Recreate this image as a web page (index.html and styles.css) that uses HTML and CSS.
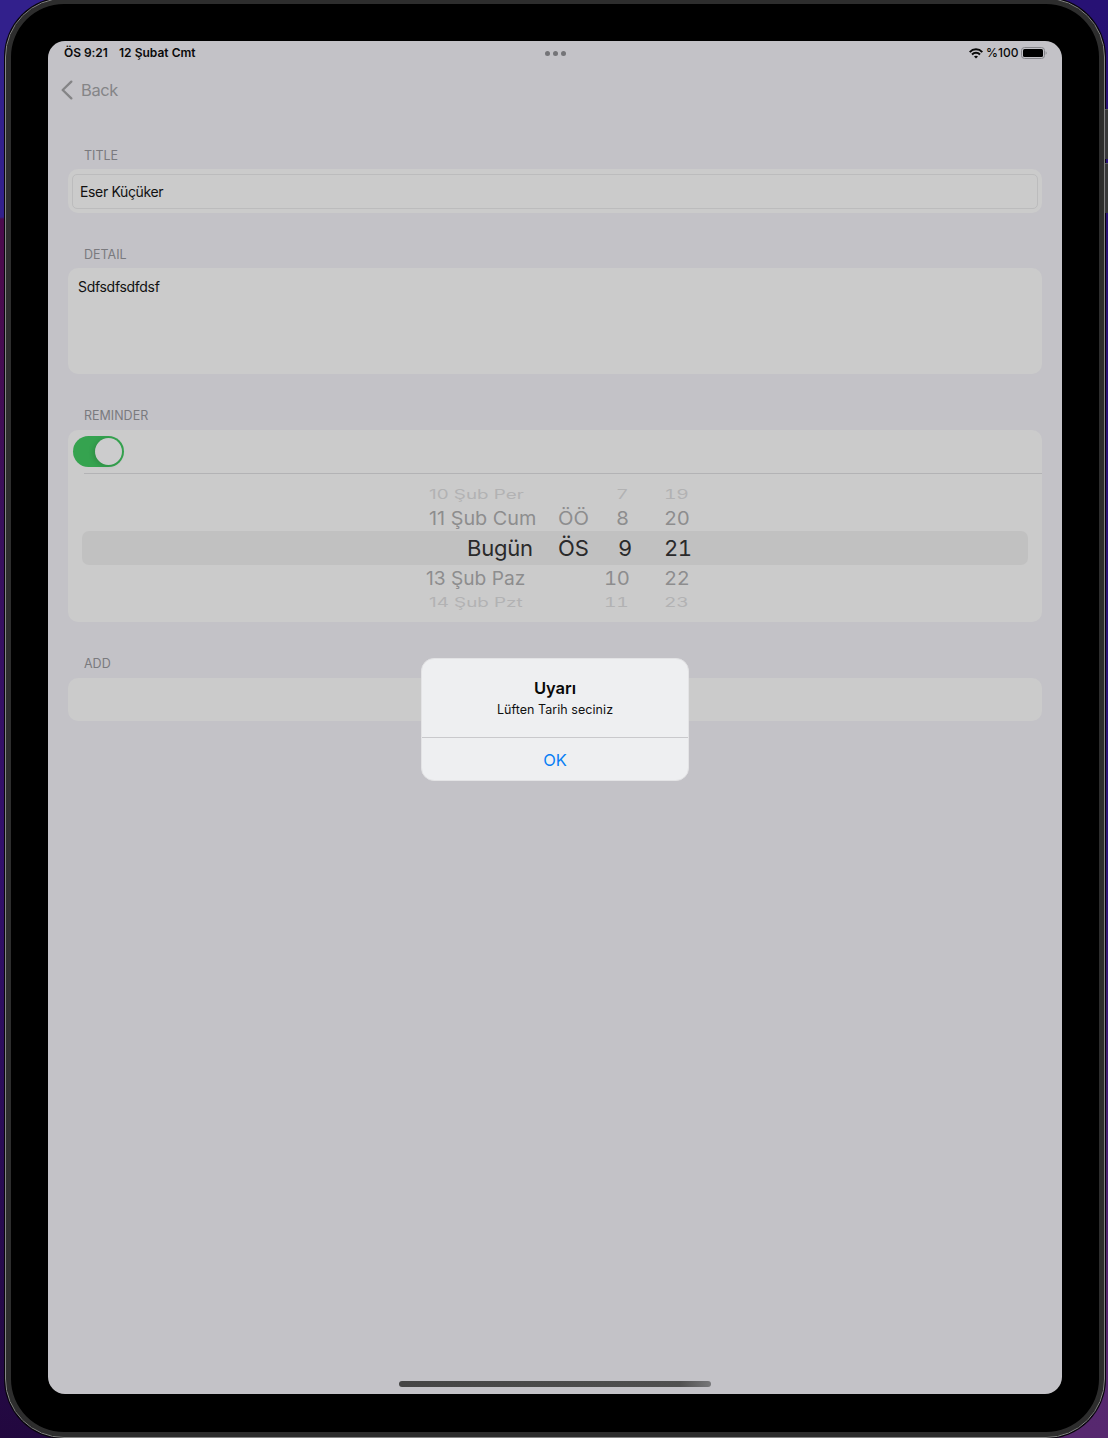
FILE: index.html
```html
<!DOCTYPE html>
<html lang="tr">
<head>
<meta charset="utf-8">
<title>Reminder</title>
<link rel="stylesheet" href="styles.css">
</head>
<body>
<div class="side-button side-button-up"></div>
<div class="side-button side-button-down"></div>
<div class="tablet">
  <main class="screen">
    <header class="status">
      <div class="status-left"><span class="clock">ÖS 9:21</span><span class="date">12 Şubat Cmt</span></div>
      <div class="dots"><i></i><i></i><i></i></div>
      <div class="status-right">
        <svg class="wifi" width="14" height="11" viewBox="0 0 14 11" fill="none" stroke="#080808" stroke-width="2"><path d="M.7 4.1C4.2.4 9.8.4 13.3 4.1"/><path d="M3 6.5c2.3-2.3 5.7-2.3 8 0"/><path d="M7 10.5 5 8.5c1.1-1.1 2.9-1.1 4 0z" fill="#080808" stroke="none"/></svg>
        <span class="percent">%100</span>
        <svg class="battery" width="26" height="12" viewBox="0 0 26 12"><rect x=".5" y=".5" width="23" height="11" rx="3" fill="none" stroke="#85858a"/><rect x="2" y="2" width="20" height="8" rx="1.5" fill="#000"/><path d="M24.7 4.2c1.2.6 1.2 3 0 3.6z" fill="#85858a"/></svg>
      </div>
    </header>
    <nav class="nav">
      <svg width="12" height="20" viewBox="0 0 12 20" fill="none" stroke="#848486" stroke-width="2.3" stroke-linecap="round" stroke-linejoin="round"><path d="M10.3 1.6 1.7 10l8.6 8.4"/></svg>
      <span class="back">Back</span>
    </nav>
    <section>
      <h2 class="label label-title">TITLE</h2>
      <div class="card title-card"><div class="field">Eser Küçüker</div></div>
    </section>
    <section>
      <h2 class="label label-detail">DETAIL</h2>
      <div class="card detail-card"><p class="detail">Sdfsdfsdfdsf</p></div>
    </section>
    <section>
      <h2 class="label label-reminder">REMINDER</h2>
      <div class="card reminder-card">
        <div class="switch-row"><div class="switch"><div class="knob"></div></div></div>
        <div class="picker">
          <div class="row outer top"><span class="day">10 Şub Per</span><span></span><span class="one">7</span><span>19</span></div>
          <div class="row near"><span class="day cum">11 Şub Cum</span><span>ÖÖ</span><span class="one">8</span><span>20</span></div>
          <div class="row current"><span class="today">Bugün</span><span>ÖS</span><span class="nine">9</span><span>21</span></div>
          <div class="row near"><span class="day">13 Şub Paz</span><span></span><span>10</span><span>22</span></div>
          <div class="row outer bottom"><span class="day">14 Şub Pzt</span><span></span><span>11</span><span>23</span></div>
        </div>
      </div>
    </section>
    <section>
      <h2 class="label label-add">ADD</h2>
      <div class="card add-card"></div>
    </section>
    <div class="home"></div>
  </main>
</div>
<div class="alert" role="alertdialog">
  <div class="alert-body"><h1>Uyarı</h1><p>Lüften Tarih seciniz</p></div>
  <div class="alert-action">OK</div>
</div>
</body>
</html>
```

FILE: styles.css
```css
* { box-sizing: border-box; margin: 0; padding: 0; }
body {
  position: relative;
  width: 1108px;
  height: 1438px;
  overflow: hidden;
  font-family: Inter, "Liberation Sans", sans-serif;
  color: #111;
  background:
    linear-gradient(#32208c 0 217px, #4b0b4d 219px 280px, #39105c 520px, #32106c 850px, #22083f 1438px) left / 554px 100% no-repeat,
    linear-gradient(#271174, #2c1578 60%, #55276f 90%, #57286f) right / 554px 100% no-repeat;
}
.tablet {
  width: 1100px;
  height: 1440px;
  margin: -2px 0 0 5px;
  padding: 42px 42px 43px;
  border: 1px solid #858585;
  border-radius: 59px;
  background: #000;
  box-shadow: inset 0 0 0 5px #2d2d2d, 0 0 0 1px #08050c;
}
.screen {
  width: 1014px;
  height: 1353px;
  border-radius: 17px;
  background: #c3c2c7;
  display: flex;
  flex-direction: column;
  padding: 0 20px;
}
.side-button { position: absolute; left: 1105px; width: 3px; height: 50px; background: #38383a; border-top: 1px solid #59595b; }
.side-button-up { top: 109px; }
.side-button-down { top: 163px; }
.status { height: 24px; margin: 0 -4px; display: grid; grid-template-columns: 1fr auto 1fr; align-items: center; font-size: 12px; font-weight: 600; line-height: 24px; color: #0a0a0a; }
.status-left { display: flex; gap: 10px; }
.clock { width: 45px; letter-spacing: -.05px; white-space: nowrap; }
.date { letter-spacing: .02px; }
.dots { display: flex; gap: 3px; padding-top: 1px; }
.dots i { width: 5px; height: 5px; border-radius: 50%; background: #747478; }
.status-right { display: flex; justify-content: flex-end; align-items: center; gap: 3px; margin-right: -1px; }
.wifi { margin-right: -1px; }
.percent { font-weight: 500; width: 32px; margin-left: 1px; }
.nav { height: 48px; margin-left: -7px; display: flex; align-items: center; gap: 8px; color: #858587; padding-top: 1px; }
.back { font-size: 16.5px; letter-spacing: -.4px; }
.label { font-size: 12.5px; font-weight: 400; line-height: 16px; color: #7a7a7e; margin-left: 16px; }
.label-title { margin-top: 35px; }
.label-detail { margin-top: 34px; }
.label-reminder, .label-add { margin-top: 34px; }
.card { background: #cbcbcb; border-radius: 10px; }
.title-card { height: 44px; margin-top: 5px; padding: 5px 4px; }
.field { height: 35px; border: 1px solid #bcbcbd; border-radius: 5px; padding-left: 7px; font-size: 14px; line-height: 33px; letter-spacing: -.35px; }
.detail-card { height: 106px; margin-top: 5px; padding: 10px; }
.detail { font-size: 14px; line-height: 18px; letter-spacing: -.3px; }
.reminder-card { height: 192px; margin-top: 6px; }
.switch-row { height: 44px; padding: 6px 5px; position: relative; }
.switch-row::after { content: ""; position: absolute; left: 16px; right: 0; bottom: 0; height: 1px; background: #b3b3b5; }
.switch { width: 51px; height: 31px; border-radius: 16px; background: #35a34f; padding: 2px; display: flex; justify-content: flex-end; }
.knob { width: 27px; height: 27px; border-radius: 50%; background: #cccccd; box-shadow: -2px 1px 5px #0002; }
.picker { padding: 7px 14px 0; font-size: 22px; white-space: nowrap; }
.row { display: grid; grid-template-columns: 132px 46px 60px 80px; padding-left: 344px; align-items: center; }
.row span { transform-origin: left center; }
.near { height: 26px; color: #8d8d8e; }
.near span { transform: scale(.92, .85); }
.near .day { transform: scale(.87, .85); }
.near .cum { transform: scale(.9, .85); margin-left: 3px; }
.outer { height: 23px; color: #b2b2b3; }
.outer span { transform: scale(.88, .58); }
.outer .day { transform: scale(.855, .58); margin-left: 3px; }
.top { height: 24px; }
.bottom { height: 22px; line-height: 22px; }
.current { height: 34px; background: #c1c1c1; border-radius: 7px; color: #2a2a2b; }
.row .today { margin-left: 41px; letter-spacing: -.2px; }
.row span:nth-child(n+3) { font-variant-numeric: tabular-nums; letter-spacing: -.4px; }
.row .one { margin-left: 11.5px; }
.row .nine { margin-left: 14px; }
.add-card { height: 43px; margin-top: 6px; }
.home { width: 312px; height: 6px; border-radius: 3px; margin: auto auto 7px 331px; background: linear-gradient(90deg, #454545, #505050 90%, #777779); }
.alert { position: absolute; left: 421px; top: 658px; width: 268px; height: 123px; border-radius: 13px; background: #eeeff1; text-align: center; border: 1px solid #e3e3e5; }
.alert-body { height: 79px; border-bottom: 1px solid #c9c9cc; padding-top: 19px; }
.alert h1 { font-size: 16.5px; font-weight: 600; line-height: 21px; color: #080808; }
.alert p { font-size: 12.5px; line-height: 21px; letter-spacing: .05px; }
.alert-action { font-size: 16.5px; line-height: 44px; color: #087ff5; }
```
